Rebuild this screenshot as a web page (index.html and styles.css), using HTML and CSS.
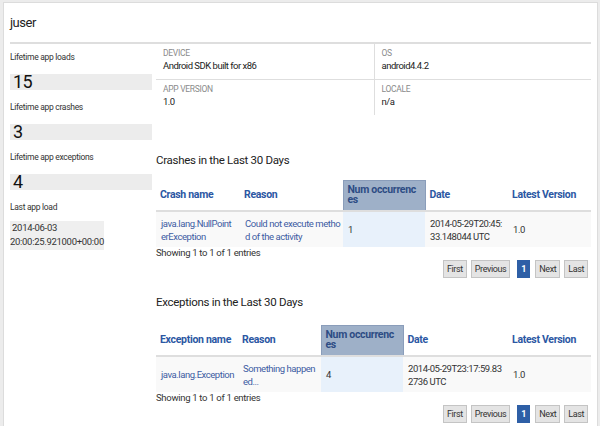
FILE: index.html
```html
<!DOCTYPE html>
<html>
<head>
<meta charset="utf-8">
<link rel="stylesheet" href="styles.css">
</head>
<body>
<div class="panel">
  <h1 class="title">juser</h1>
  <div class="main">
    <aside class="stats">
      <div class="stat">
        <div class="stat-label">Lifetime app loads</div>
        <div class="stat-box">15</div>
      </div>
      <div class="stat">
        <div class="stat-label">Lifetime app crashes</div>
        <div class="stat-box">3</div>
      </div>
      <div class="stat">
        <div class="stat-label">Lifetime app exceptions</div>
        <div class="stat-box">4</div>
      </div>
      <div class="stat">
        <div class="stat-label">Last app load</div>
        <div class="last-load">&nbsp;2014-06-03<br>20:00:25.921000+00:00</div>
      </div>
    </aside>
    <section class="content">
      <div class="info">
        <div class="info-cell top">
          <div class="info-label">DEVICE</div>
          <div class="info-value">Android SDK built for x86</div>
        </div>
        <div class="info-cell top right">
          <div class="info-label">OS</div>
          <div class="info-value">android4.4.2</div>
        </div>
        <div class="info-cell">
          <div class="info-label">APP VERSION</div>
          <div class="info-value">1.0</div>
        </div>
        <div class="info-cell right">
          <div class="info-label">LOCALE</div>
          <div class="info-value">n/a</div>
        </div>
      </div>

      <h2 class="section-title first">Crashes in the Last 30 Days</h2>
      <table class="data crash">
        <colgroup>
          <col class="w84"><col class="w103"><col class="w82"><col class="w83"><col>
        </colgroup>
        <thead>
          <tr>
            <th>Crash name</th>
            <th>Reason</th>
            <th class="sorted">Num occurrences</th>
            <th>Date</th>
            <th>Latest Version</th>
          </tr>
        </thead>
        <tbody>
          <tr>
            <td class="link">java.lang.NullPointerException</td>
            <td class="link">Could not execute method of the activity</td>
            <td class="sorted">1</td>
            <td>2014-05-29T20:45:33.148044 UTC</td>
            <td>1.0</td>
          </tr>
        </tbody>
      </table>
      <div class="showing">Showing 1 to 1 of 1 entries</div>
      <div class="pager">
        <span class="btn">First</span>
        <span class="btn">Previous</span>
        <span class="btn active">1</span>
        <span class="btn">Next</span>
        <span class="btn">Last</span>
      </div>

      <h2 class="section-title">Exceptions in the Last 30 Days</h2>
      <table class="data exc">
        <colgroup>
          <col class="w82"><col class="w83"><col class="w82"><col class="w105"><col>
        </colgroup>
        <thead>
          <tr>
            <th>Exception name</th>
            <th>Reason</th>
            <th class="sorted">Num occurrences</th>
            <th>Date</th>
            <th>Latest Version</th>
          </tr>
        </thead>
        <tbody>
          <tr>
            <td class="link">java.lang.Exception</td>
            <td class="link">Something happened...</td>
            <td class="sorted">4</td>
            <td>2014-05-29T23:17:59.832736 UTC</td>
            <td>1.0</td>
          </tr>
        </tbody>
      </table>
      <div class="showing">Showing 1 to 1 of 1 entries</div>
      <div class="pager">
        <span class="btn">First</span>
        <span class="btn">Previous</span>
        <span class="btn active">1</span>
        <span class="btn">Next</span>
        <span class="btn">Last</span>
      </div>
    </section>
  </div>
</div>
</body>
</html>
```
FILE: styles.css
```css
* { box-sizing: border-box; }
html, body { margin: 0; padding: 0; }
body {
  background: #ececec;
  font-family: "Roboto", "Liberation Sans", sans-serif;
  color: #333;
  letter-spacing: -0.3px;
  height: 426px;
  overflow: hidden;
}
.panel {
  margin: 2px 2px 0 3px;
  border: 1px solid #dcdcdc;
  border-bottom: none;
  background: #fff;
  padding: 0 6px;
  min-height: 440px;
}
.title {
  margin: 0;
  font-size: 13px;
  font-weight: 400;
  color: #222;
  line-height: 39px;
  letter-spacing: -0.5px;
  border-bottom: 2px solid #dedede;
}
.main {
  display: grid;
  grid-template-columns: 146px 1fr;
}
.stats { padding-top: 7px; padding-right: 4px; }
.stat-label {
  font-size: 8.5px;
  line-height: 12px;
  color: #333;
  margin-bottom: 11px;
}
.stat-box {
  background: #ececec;
  height: 16px;
  line-height: 16px;
  font-size: 18px;
  color: #111;
  padding-left: 3px;
  margin-bottom: 11px;
  letter-spacing: -0.5px;
}
.last-load {
  display: inline-block;
  background: #efefef;
  font-size: 9.5px;
  line-height: 14px;
  color: #333;
  margin-top: -3px;
  padding-bottom: 1px;
}

.info {
  display: grid;
  grid-template-columns: 1fr 1fr;
}
.info-cell { padding: 4px 7px 6px; }
.info-cell.top { border-bottom: 1px solid #dedede; }
.info-cell.right { border-left: 1px solid #dedede; }
.info-label {
  font-size: 8.5px;
  line-height: 11px;
  color: #8a8a8a;
}
.info-value {
  font-size: 9.5px;
  line-height: 14px;
  color: #222;
  letter-spacing: -0.5px;
}

.section-title {
  margin: 38px 0 13px;
  font-size: 11.5px;
  font-weight: 400;
  line-height: 14px;
  color: #222;
}
.section-title:not(.first) { margin-top: 17px; margin-bottom: 16px; }

.data {
  width: 100%;
  border-collapse: collapse;
  table-layout: fixed;
}
.w82 { width: 82px; }
.w83 { width: 83px; }
.w84 { width: 84px; }
.w103 { width: 103px; }
.w105 { width: 105px; }
.data th {
  text-align: left;
  font-size: 10.5px;
  font-weight: 700;
  color: #2b57a3;
  line-height: 10px;
  height: 29px;
  padding: 4px 3px 5px 4px;
  border-bottom: 2px solid #dedede;
  vertical-align: middle;
  word-break: break-all;
}
.data th.sorted {
  background: #9eb0c8;
  color: #2d4c84;
  border: 1px solid #8a9dba;
  border-bottom: 2px solid #dedede;
  vertical-align: top;
  padding-right: 7px;
}
.data td {
  background: #f9f9f9;
  font-size: 9.5px;
  line-height: 13px;
  letter-spacing: -0.45px;
  height: 36px;
  padding: 4px 5px 4px 5px;
  vertical-align: middle;
  word-break: break-all;
  color: #333;
}
.crash td:first-child { padding-right: 8px; }
.crash td:nth-child(2) { padding-right: 2px; }
.exc td:first-child { padding-right: 3px; }
.data td.link { color: #3d5ca3; }
.data td.sorted { background: #e8f1fb; }

.showing {
  font-size: 9.5px;
  line-height: 12px;
  color: #333;
}
.pager {
  display: flex;
  justify-content: flex-end;
  gap: 4px;
  padding-right: 3px;
  margin-top: 1px;
}
.btn {
  display: block;
  height: 18px;
  line-height: 16px;
  padding: 0 3px;
  border: 1px solid #c4c4c4;
  background: #e4e4e4;
  font-size: 9px;
  letter-spacing: -0.4px;
  color: #333;
}
.btn.active {
  background: #2e5fa6;
  border-color: #2e5fa6;
  color: #fff;
  font-weight: 700;
  width: 13px;
  text-align: center;
  padding: 0;
  margin: 0 1px 0 3px;
}
```
